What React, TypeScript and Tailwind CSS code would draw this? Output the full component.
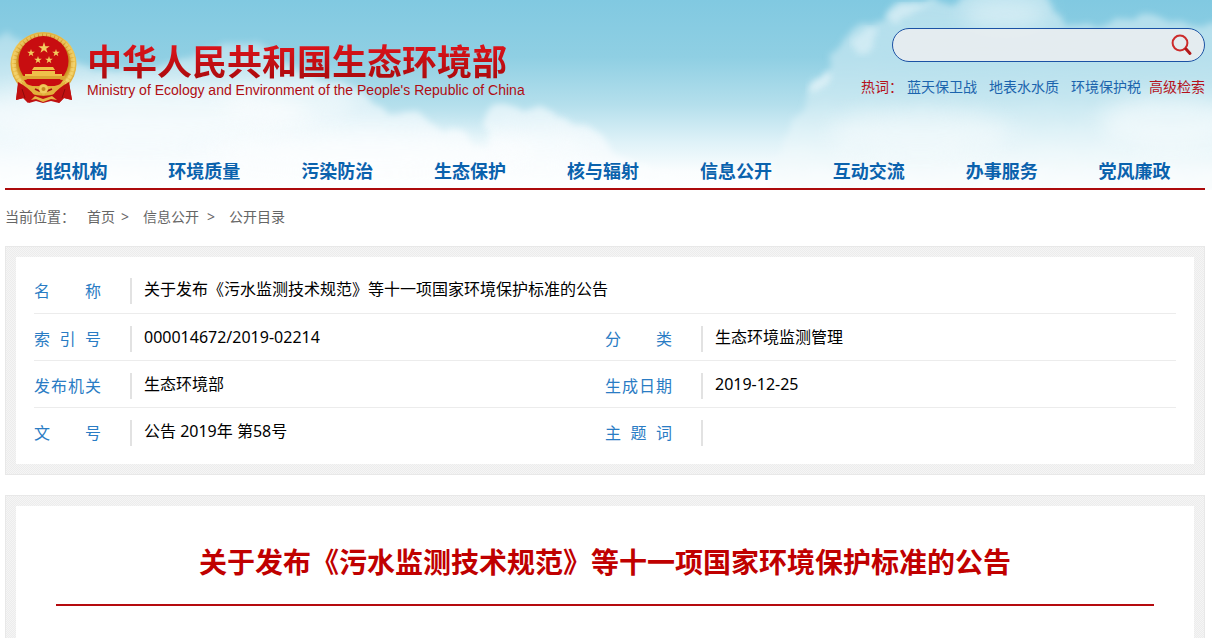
import {useState} from "react";
import type {FormEvent} from "react";

const navItems = [
  '组织机构',
  '环境质量',
  '污染防治',
  '生态保护',
  '核与辐射',
  '信息公开',
  '互动交流',
  '办事服务',
  '党风廉政',
];

const hotWords = ['蓝天保卫战', '地表水水质', '环境保护税'];

const docTitle = '关于发布《污水监测技术规范》等十一项国家环境保护标准的公告';

const infoRows = [
  [{ label: '索引号', value: '000014672/2019-02214' }, { label: '分类', value: '生态环境监测管理' }],
  [{ label: '发布机关', value: '生态环境部' }, { label: '生成日期', value: '2019-12-25' }],
  [{ label: '文号', value: '公告 2019年 第58号' }, { label: '主题词', value: '' }],
];

const starPath = 'M0,-1 L0.23,-0.31 L0.95,-0.31 L0.37,0.12 L0.59,0.81 L0,0.39 L-0.59,0.81 L-0.37,0.12 L-0.95,-0.31 L-0.23,-0.31 Z';

const Sky = () => (
  <svg
    className="absolute inset-0 h-full w-full"
    viewBox="0 0 1212 188"
    preserveAspectRatio="none"
    aria-hidden="true"
  >
    <defs>
      <linearGradient id="sky" x1="0" y1="0" x2="0" y2="1">
        <stop offset="0" stopColor="#81c9e1" />
        <stop offset="0.3" stopColor="#8fcfe3" />
        <stop offset="0.55" stopColor="#b4dfec" />
        <stop offset="0.75" stopColor="#dff2f8" />
        <stop offset="0.9" stopColor="#fafdfe" />
        <stop offset="1" stopColor="#ffffff" />
      </linearGradient>
      <linearGradient id="cloudRight" x1="0" y1="0" x2="0" y2="1">
        <stop offset="0" stopColor="#d3ecf3" stopOpacity="0.65" />
        <stop offset="0.5" stopColor="#d9eff5" stopOpacity="0.5" />
        <stop offset="1" stopColor="#ffffff" stopOpacity="0.9" />
      </linearGradient>
      <linearGradient id="cloudLeft" x1="0" y1="0" x2="0" y2="1">
        <stop offset="0" stopColor="#e3f3f8" stopOpacity="0.4" />
        <stop offset="0.5" stopColor="#f3fafd" stopOpacity="0.7" />
        <stop offset="1" stopColor="#ffffff" />
      </linearGradient>
      <filter id="soft" x="-10%" y="-10%" width="120%" height="120%">
        <feTurbulence type="fractalNoise" baseFrequency="0.05" numOctaves="3" seed="4" result="noise" />
        <feDisplacementMap in="SourceGraphic" in2="noise" scale="14" xChannelSelector="R" yChannelSelector="G" result="rough" />
        <feGaussianBlur in="rough" stdDeviation="3" />
      </filter>
      <filter id="softer" x="-30%" y="-60%" width="160%" height="220%">
        <feGaussianBlur stdDeviation="10" />
      </filter>
    </defs>
    <rect width="1212" height="188" fill="url(#sky)" />

    {/* left bank */}
    <path
      d="M-20,38 L8,34 L30,44 L80,62 L130,74 L190,56 L232,42 L262,44 L284,62 L318,80 L345,84 L372,100 L384,112 L420,112 L440,128 L462,132 L476,146 L486,148 L484,120 L492,102 L520,110 L545,106 L580,124 L606,136 L622,156 L660,170 L700,190 L-20,200 Z"
      fill="url(#cloudLeft)"
      filter="url(#soft)"
    />
    <ellipse cx="140" cy="112" rx="170" ry="30" fill="#ffffff" opacity="0.55" filter="url(#softer)" />
    <ellipse cx="290" cy="100" rx="70" ry="24" fill="#ffffff" opacity="0.4" filter="url(#softer)" />
    <ellipse cx="370" cy="150" rx="160" ry="22" fill="#ffffff" opacity="0.5" filter="url(#softer)" />
    <ellipse cx="540" cy="145" rx="50" ry="20" fill="#ffffff" opacity="0.3" filter="url(#softer)" />

    {/* right bank */}
    <path
      d="M795,120 L812,88 L830,66 L840,44 L856,26 L880,22 L892,6 L910,2 L936,0 L952,6 L975,-12 L1040,-12 L1052,8 L1070,24 L1096,26 L1120,18 L1160,16 L1188,24 L1230,28 L1230,200 L760,200 L780,150 Z"
      fill="url(#cloudRight)"
      filter="url(#soft)"
    />
    <ellipse cx="1005" cy="14" rx="44" ry="16" fill="#f4fbfd" opacity="0.45" filter="url(#softer)" />
    <path d="M884,18 L902,6 L934,4 L912,14 L892,24 Z" fill="#e9f6fa" opacity="0.5" filter="url(#soft)" />
    <path d="M852,40 L866,28 L878,32 L874,48 L858,54 Z" fill="#e9f6fa" opacity="0.5" filter="url(#soft)" />
    <path d="M812,84 L826,70 L834,74 L826,86 L808,94 Z" fill="#e9f6fa" opacity="0.7" filter="url(#soft)" />
    <ellipse cx="920" cy="130" rx="90" ry="22" fill="#ffffff" opacity="0.4" filter="url(#softer)" />
    <ellipse cx="1170" cy="120" rx="70" ry="26" fill="#ffffff" opacity="0.5" filter="url(#softer)" />
  </svg>
);

const Emblem = () => (
  <svg className="h-20 w-[76px] shrink-0" viewBox="0 0 76 80" role="img" aria-label="国徽">
    <defs>
      <radialGradient id="ring" cx="0.5" cy="0.45" r="0.55">
        <stop offset="0.7" stopColor="#c98a1c" />
        <stop offset="0.85" stopColor="#f0c855" />
        <stop offset="1" stopColor="#d59a28" />
      </radialGradient>
    </defs>
    <path d="M14,50 L11,72 L19,70 L24,75 L31,73 L38,75 L46,73 L54,75 L59,70 L67,72 L63,50 Z" fill="#bf1111" />
    <ellipse cx="38.5" cy="36" rx="33" ry="32" fill="url(#ring)" />
    <ellipse cx="38.5" cy="36" rx="29.5" ry="28.5" fill="none" stroke="#f8df86" strokeWidth="4" strokeDasharray="3 1" opacity="0.5" />
    <circle cx="38.5" cy="33" r="25" fill="#c80d10" />
    <g fill="#f3cd5e">
      <path d={starPath} transform="translate(39 20) scale(6)" />
      <path d={starPath} transform="translate(26 25) scale(4)" />
      <path d={starPath} transform="translate(51 25) scale(4)" />
      <path d={starPath} transform="translate(33 32) scale(4)" />
      <path d={starPath} transform="translate(44 32) scale(4)" />
    </g>
    <path d="M29,39 H48 L50,42 H27 Z M27,43 H50 V46 H57 V51 H20 V46 H27 Z" fill="#efc04a" />
    <path d="M17,48 H60 V51 H17 Z" fill="#dda633" />
    <path d="M19,52 H58 L54,58 H23 Z" fill="#c80d10" />
    <path d="M16,53 Q27,60 34,58 Q38,54 43,58 Q50,60 61,53 L57,64 Q46,68 38,66 Q30,68 20,64 Z" fill="#e3b03c" />
    <path d="M13,54 Q24,60 29,67 L23,75 L18,70 L11,72 Z M64,54 Q53,60 48,67 L54,75 L59,70 L67,72 Z" fill="#c01010" />
    <path d="M30,61 Q38,66 47,61" fill="none" stroke="#a31010" strokeWidth="1.5" />
    <circle cx="38.5" cy="61" r="4.5" fill="#f0c95c" />
    <circle cx="38.5" cy="61" r="2" fill="#c68a20" />
    <path d="M26,72 L30,68 L38,71 L47,68 L52,72 L46,71 L38,74 L31,71 Z" fill="#e6b644" />
    <path d="M17,61 L20,70 M60,61 L57,70" stroke="#8d0b0b" strokeWidth="1" />
  </svg>
);

const SearchIcon = () => (
  <svg className="h-6 w-6" viewBox="0 0 24 24" fill="none" aria-hidden="true">
    <circle cx="10" cy="10" r="7.4" stroke="#cc2b2b" strokeWidth="2" />
    <path d="M16,16 L20,20.5" stroke="#b3191b" strokeWidth="3" strokeLinecap="round" />
  </svg>
);

const SearchBox = () => {

    const [keyword, setKeyword] = useState('');

    const startSearch = (event: FormEvent) => {
      event.preventDefault();
    };

    return (
        <div className="flex flex-col items-end">
          <form
            onSubmit={startSearch}
            className="flex h-[34px] w-[313px] items-center rounded-full border border-[#1b52a4] bg-[#e9edf0]/90 pr-2.5 pl-4"
          >
            <input
              type="text"
              aria-label="搜索"
              value={keyword}
              onChange={(e) => setKeyword(e.target.value)}
              className="min-w-0 flex-1 bg-transparent text-sm outline-none"
            />
            <button type="submit" aria-label="检索" className="cursor-pointer">
              <SearchIcon />
            </button>
          </form>
          <div className="mt-[15px] flex text-sm leading-5 text-[#b5121b]">
            <span className="mr-1">热词：</span>
            <div className="mr-2 flex gap-3">
              {hotWords.map((word) => (
                <a key={word} href="#" className="text-[#1b64ad]">{word}</a>
              ))}
            </div>
            <a href="#">高级检索</a>
          </div>
        </div>
    );
}

const Header = () => (
    <header className="relative pr-0.5">
      <Sky />
      <div className="relative mx-auto max-w-[1200px]">
        <div className="flex h-[154px] items-start justify-between pt-7">
          <a href="#" className="flex">
            <Emblem />
            <span className="ml-1.5 flex flex-col pt-3.5">
              <span className="bg-linear-to-b from-[#e0141c] to-[#a80a0c] bg-clip-text text-[35px] leading-10 font-bold text-transparent">
                中华人民共和国生态环境部
              </span>
              <span className="font-['Liberation_Sans',sans-serif] text-sm leading-4 text-[#b00d12]">
                Ministry of Ecology and Environment of the People's Republic of China
              </span>
            </span>
          </a>
          <SearchBox />
        </div>
        <nav className="flex border-b-2 border-[#ab0a0c] pr-1">
          {navItems.map((item) => (
            <a key={item} href="#" className="flex-1 text-center text-lg leading-[34px] font-bold text-[#0a62ad]">
              {item}
            </a>
          ))}
        </nav>
      </div>
    </header>
);

const Label = ({ text }: { text: string }) => (
    <th scope="row" className="h-[47px] pt-1 font-normal">
      <div className="flex h-[26px] items-center border-r-2 border-[#e2e2e2]">
        <span className="w-[67px] text-[#2a7cc4] [text-align-last:justify]">{text}</span>
      </div>
    </th>
);

const InfoTable = () => (
    <table className="w-full table-fixed text-base leading-6">
      <colgroup>
        <col className="w-[98px]" />
        <col />
        <col className="w-[98px]" />
        <col />
      </colgroup>
      <tbody>
        <tr className="border-b border-[#ececec]">
          <Label text="名称" />
          <td colSpan={3} className="pl-3">{docTitle}</td>
        </tr>
        {infoRows.map((row) => (
          <tr key={row[0].label} className="border-b border-[#ececec] last:border-b-0">
            <Label text={row[0].label} />
            <td className="pl-3">{row[0].value}</td>
            <Label text={row[1].label} />
            <td className="pl-3">{row[1].value}</td>
          </tr>
        ))}
      </tbody>
    </table>
);

const App = () => {
    return (
        <div className="flex min-h-screen flex-col bg-white font-['Noto_Sans','Noto_Sans_CJK_SC',sans-serif] text-black">
          <Header />
          <div className="flex flex-1 pr-0.5">
            <main className="mx-auto flex w-full max-w-[1200px] flex-col">
              <div className="flex h-14 items-center pb-0.5 text-sm text-[#666]">
                <span className="mr-3">当前位置：</span>
                <a href="#">首页</a>
                <span className="mr-3.5 ml-1.5">&gt;</span>
                <a href="#">信息公开</a>
                <span className="mr-3.5 ml-2">&gt;</span>
                <a href="#">公开目录</a>
              </div>
              <section className="border border-[#e8e8e8] bg-[repeating-conic-gradient(#ececec_0_25%,#f5f5f5_0_50%)] bg-[length:2px_2px] p-2.5">
                <div className="bg-white px-[18px] pt-[9px] pb-2.5">
                  <InfoTable />
                </div>
              </section>
              <section className="mt-5 flex flex-1 flex-col border border-b-0 border-[#e8e8e8] bg-[repeating-conic-gradient(#ececec_0_25%,#f5f5f5_0_50%)] bg-[length:2px_2px] px-2.5 pt-2.5">
                <div className="flex-1 bg-white px-10 pt-7">
                  <h1 className="border-b-2 border-[#b50a0e] pb-3.5 text-center text-[28px] leading-[56px] font-bold text-[#c00000]">
                    {docTitle}
                  </h1>
                </div>
              </section>
            </main>
          </div>
        </div>
    );
};

export default App
